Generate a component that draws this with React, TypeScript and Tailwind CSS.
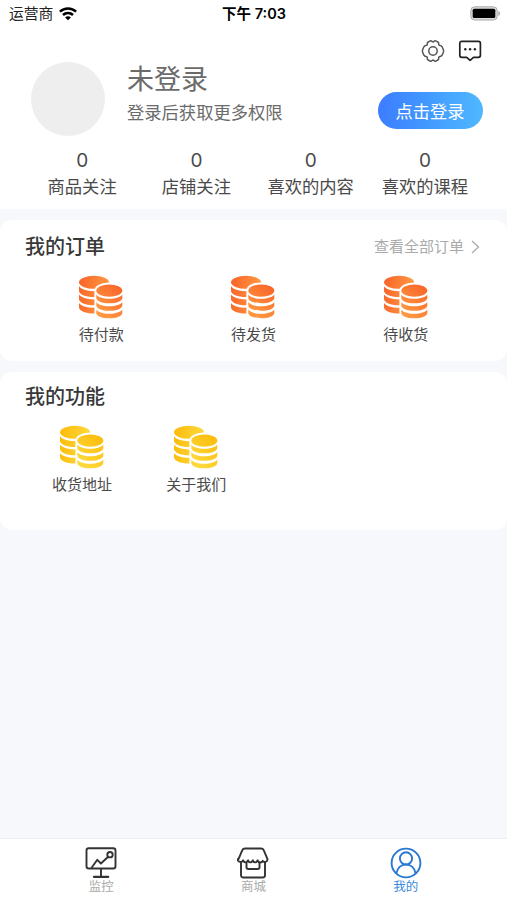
type CoinColors = { id: string; from: string; to: string };

const ORANGE: CoinColors = { id: "orange", from: "#f9672b", to: "#ff9640" };
const YELLOW: CoinColors = { id: "yellow", from: "#fcbc0c", to: "#fdd83a" };

const STATS = [
  { label: "商品关注", value: 0 },
  { label: "店铺关注", value: 0 },
  { label: "喜欢的内容", value: 0 },
  { label: "喜欢的课程", value: 0 },
];

const ORDERS = ["待付款", "待发货", "待收货"];
const FEATURES = ["收货地址", "关于我们"];

function CoinsIcon({ id, from, to }: CoinColors) {
  const back = "v4.400c0 3.300 6.500 6.300 15 6.300s15-3 15-6.300v-4.400c-2 2.900-7.500 4.900-15 4.900s-13-2-15-4.900z";
  const front = "v3.400c0 2.900 5.500 5.300 13 5.300s13-2.400 13-5.300v-3.400c-1.500 2.500-6.500 4.300-13 4.300s-11.500-1.800-13-4.300z";
  return (
    <svg width="44" height="44" viewBox="0 0 44 44">
      <defs>
        <linearGradient id={`${id}-back`} gradientUnits="userSpaceOnUse" x1="2" y1="6" x2="28" y2="10">
          <stop stopColor={from} />
          <stop offset="1" stopColor={to} />
        </linearGradient>
        <linearGradient id={`${id}-front`} gradientUnits="userSpaceOnUse" x1="42" y1="14" x2="22" y2="36">
          <stop stopColor={from} />
          <stop offset="1" stopColor={to} />
        </linearGradient>
      </defs>
      <g fill={`url(#${id}-back)`}>
        <ellipse cx="15" cy="7.300" rx="15" ry="6.500" />
        <path d={`M0 11.300${back}`} />
        <path d={`M0 19.600${back}`} />
        <path d={`M0 27.900${back}`} />
      </g>
      <path d="M15.400 15.600c0-4.600 6-8.200 14.900-8.200s15.700 3.600 15.700 8.200V46H15.400z" fill="#fff" />
      <g fill={`url(#${id}-front)`}>
        <ellipse cx="30.300" cy="15.600" rx="13" ry="6.200" />
        <path d={`M17.300 19.500${front}`} />
        <path d={`M17.300 27${front}`} />
        <path d={`M17.300 34.500${front}`} />
      </g>
    </svg>
  );
}

function WifiIcon() {
  return (
    <svg width="18" height="14" viewBox="0 0 18 14" fill="none" stroke="#000" strokeWidth="2.500">
      <path d="M.9 4.700C5.400.3 12.600.3 17.100 4.700" />
      <path d="M4 8c2.800-2.700 7.200-2.700 10 0" />
      <path d="M9 13.200 6.100 10.400c1.600-1.500 4.200-1.500 5.800 0z" fill="#000" stroke="none" />
    </svg>
  );
}

function BatteryIcon() {
  return (
    <svg width="31" height="15" viewBox="0 0 31 15">
      <rect x=".8" y=".8" width="26.4" height="13.2" rx="3.8" fill="#dcdcdc" stroke="#aaa" />
      <rect x="2.7" y="2.7" width="22.6" height="9.4" rx="1.5" fill="#000" />
      <path d="M28.3 5v5c1.1-.4 1.8-1.3 1.8-2.5S29.4 5.4 28.3 5z" fill="#aaa" />
    </svg>
  );
}

function GearIcon() {
  return (
    <svg width="24" height="24" viewBox="0 0 24 24" fill="none" stroke="#555" strokeWidth="1.500">
      <path
        strokeLinejoin="round"
        d="M8.700 2.200Q10 1.300 11.100 2.500Q12 3.300 12.900 2.500Q14 1.300 15.300 2.200L16.800 3Q17.900 3.600 17.700 5Q17.500 6.300 18.900 6.600Q20.400 6.500 21.100 7.800L22.300 10.500Q23 12 22.300 13.500L21.100 16.200Q20.400 17.500 18.900 17.400Q17.500 17.700 17.700 19Q17.900 20.400 16.800 21L15.300 21.800Q14 22.700 12.900 21.500Q12 20.700 11.100 21.500Q10 22.700 8.700 21.800L7.200 21Q6.100 20.400 6.300 19Q6.500 17.700 5.100 17.400Q3.600 17.500 2.900 16.200L1.700 13.500Q1 12 1.700 10.500L2.900 7.800Q3.600 6.500 5.100 6.600Q6.500 6.300 6.300 5Q6.100 3.600 7.200 3z"
      />
      <circle cx="12" cy="12" r="4.200" />
    </svg>
  );
}

function MessageIcon() {
  return (
    <svg width="24" height="24" viewBox="0 0 24 24">
      <path
        d="M3.800 2.300h16.600a2 2 0 0 1 2 2v12a2 2 0 0 1-2 2h-4.900L12.100 21.300l-3.400-3H3.800a2 2 0 0 1-2-2v-12a2 2 0 0 1 2-2z"
        fill="none"
        stroke="#222"
        strokeWidth="1.700"
        strokeLinejoin="round"
      />
      <g fill="#222">
        <circle cx="7.300" cy="10.300" r="1.200" />
        <circle cx="12.100" cy="10.300" r="1.200" />
        <circle cx="16.900" cy="10.300" r="1.200" />
      </g>
    </svg>
  );
}

function MonitorIcon() {
  return (
    <svg width="32" height="32" viewBox="0 0 32 32" fill="none" stroke="#333" strokeWidth="1.900" strokeLinejoin="round">
      <rect x="1.500" y="1.200" width="29" height="20.300" rx="2.300" />
      <path d="M6.400 21 12.300 12.800l3.600 3.700 7-6.500M16 21.500V29" />
      <circle cx="25" cy="7.700" r="2.700" />
      <path d="M9 29.800h14.200" strokeWidth="2.300" strokeLinecap="round" />
    </svg>
  );
}

function ShopIcon() {
  return (
    <svg width="32" height="32" viewBox="0 0 32 32" fill="none" stroke="#333" strokeWidth="1.900" strokeLinejoin="round" strokeLinecap="round">
      <path d="M1.500 12.200 5.200 3.300Q6 1.500 8 1.500h16q2 0 2.800 1.800l3.700 8.900c.3 2.800-3.800 3.700-4.800 1.600-1 2.300-4.300 2.300-5.100-.5-1 2.800-4 2.800-4.800 0-1 2.800-4 2.800-4.800 0-1 2.800-4 2.800-4.900 0-1 2.900-5.600 1.700-5.600-1.100z" />
      <path d="M4 15.500V28.300a2.200 2.200 0 0 0 2.200 2.200h19.600a2.200 2.200 0 0 0 2.200-2.200V15.500" />
      <path d="M9.500 16v4.300a1.700 1.700 0 0 0 1.700 1.700h9.600a1.700 1.700 0 0 0 1.700-1.700V16" />
    </svg>
  );
}

function UserIcon() {
  return (
    <svg width="32" height="32" viewBox="0 0 32 32" fill="none" stroke="#2878d2" strokeWidth="1.900">
      <circle cx="16" cy="16" r="14.400" />
      <circle cx="16" cy="11.400" r="6.100" />
      <path d="M6.300 26.600C7.300 21.100 11 17.500 16 17.500s8.700 3.600 9.700 9.100" />
    </svg>
  );
}

function IconEntry({ label, colors }: { label: string; colors: CoinColors }) {
  return (
    <div className="flex flex-col items-center">
      <CoinsIcon {...colors} />
      <span className="mt-[6px] text-[15px] leading-5 text-[#4a4a4a]">{label}</span>
    </div>
  );
}

export default function App() {
  return (
    <div className="flex h-[900px] w-[507px] flex-col bg-[#f6f8fb] font-['Inter','Noto_Sans_CJK_SC',sans-serif]">
      <header className="h-[209px] bg-white">
        <div className="grid h-[27px] grid-cols-[1fr_auto_1fr] items-center pr-[6px] pl-[9px]">
          <div className="flex items-center gap-[6px]">
            <span className="pt-px text-[14.800px] leading-5 text-[#222]">运营商</span>
            <WifiIcon />
          </div>
          <span className="-ml-[2px] pt-px text-[14.500px] leading-5 font-semibold">下午 7:03</span>
          <div className="flex justify-end">
            <BatteryIcon />
          </div>
        </div>

        <div className="flex h-[121px] pl-[31px]">
          <div className="mt-[35px] size-[74px] rounded-full bg-[#eee]" />
          <div className="mt-[35px] ml-[22px] flex-1 text-[#6b6b6b]">
            <h1 className="text-[27px] leading-9">未登录</h1>
            <p className="mt-[3px] text-[17.300px] leading-6">登录后获取更多权限</p>
          </div>
          <div className="flex w-[129px] flex-col pt-[12px]">
            <div className="flex gap-[13px] pl-[43px]">
              <GearIcon />
              <MessageIcon />
            </div>
            <button className="mt-[29px] h-[37px] w-[105px] rounded-full bg-linear-to-r from-[#3c7cff] to-[#4fb8ff] pt-px pr-px text-[17.300px] leading-[37px] text-white">
              点击登录
            </button>
          </div>
        </div>

        <div className="grid grid-cols-4 px-[25px] text-center text-[#4a4a4a]">
          {STATS.map((item) => (
            <div key={item.label}>
              <div className="text-[19px] leading-[26px]">{item.value}</div>
              <div className="text-[17.300px] leading-[26px] whitespace-nowrap">{item.label}</div>
            </div>
          ))}
        </div>
      </header>

      <section className="mt-[11px] h-[141px] rounded-xl bg-white px-[25px] pt-[12px]">
        <div className="flex h-[30px] items-center justify-between">
          <h2 className="text-[20px] font-medium text-[#383838]">我的订单</h2>
          <div className="flex items-center gap-[5px] text-[15px] text-[#aaa]">
            查看全部订单
            <svg width="13" height="14" viewBox="0 0 13 14" fill="none" stroke="#aaa" strokeWidth="1.300">
              <path d="m3 1 6.500 6L3 13" />
            </svg>
          </div>
        </div>
        <div className="mt-[13px] grid grid-cols-3">
          {ORDERS.map((label) => (
            <IconEntry key={label} label={label} colors={ORANGE} />
          ))}
        </div>
      </section>

      <section className="mt-[11px] h-[158px] rounded-xl bg-white px-[25px] pt-[10px]">
        <h2 className="text-[20px] leading-[30px] font-medium text-[#383838]">我的功能</h2>
        <div className="mt-[13px] grid grid-cols-4">
          {FEATURES.map((label) => (
            <IconEntry key={label} label={label} colors={YELLOW} />
          ))}
        </div>
      </section>

      <nav className="mt-auto grid h-[62px] grid-cols-3 border-t border-[#eceef2] bg-white px-[25px] pt-[8px] text-[12.500px] leading-4 text-[#aaa]">
        <div className="flex flex-col items-center">
          <MonitorIcon />
          <span>监控</span>
        </div>
        <div className="flex flex-col items-center">
          <ShopIcon />
          <span>商城</span>
        </div>
        <div className="flex flex-col items-center text-[#3b88e0]">
          <UserIcon />
          <span>我的</span>
        </div>
      </nav>
    </div>
  );
}
